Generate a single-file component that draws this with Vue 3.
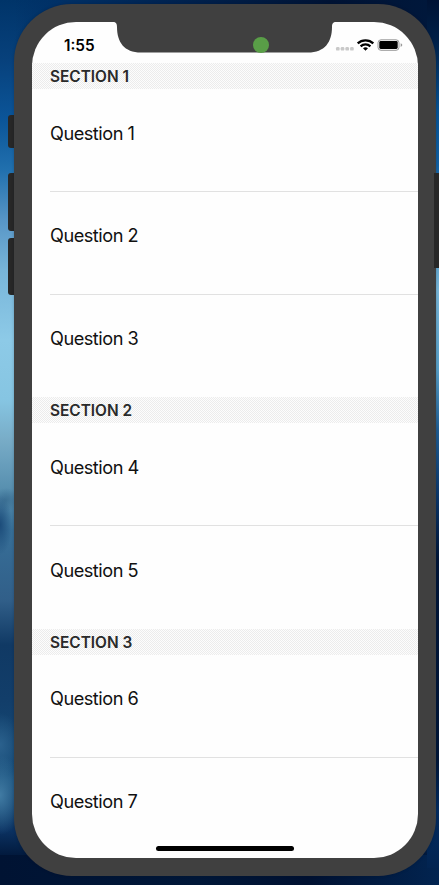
<script setup>
const sections = [
  { title: 'SECTION 1', questions: ['Question 1', 'Question 2', 'Question 3'] },
  { title: 'SECTION 2', questions: ['Question 4', 'Question 5'] },
  { title: 'SECTION 3', questions: ['Question 6', 'Question 7'] },
]
</script>

<template>
  <div class="desktop">
    <span class="key mute"></span>
    <span class="key up"></span>
    <span class="key down"></span>
    <span class="key power"></span>
    <div class="phone">
      <main class="screen">
        <svg class="notch" viewBox="0 0 223 31" width="223" height="31">
          <path d="M0 0C3 0 4 1.5 4 5C4 20 11 30.5 28 30.5H195C212 30.5 219 20 219 5C219 1.5 220 0 223 0Z" fill="#404040" />
          <circle cx="148" cy="23" r="8" fill="#599e47" />
        </svg>
        <header class="status">
          <span class="time">1:55</span>
          <svg class="indicators" width="68" height="14" viewBox="0 0 68 14">
            <g fill="#c9c9c9">
              <rect x="1" y="9" width="3.6" height="3.6" rx="1.2" />
              <rect x="5.7" y="9" width="3.6" height="3.6" rx="1.2" />
              <rect x="10.4" y="9" width="3.6" height="3.6" rx="1.2" />
              <rect x="15.1" y="9" width="3.6" height="3.6" rx="1.2" />
            </g>
            <g transform="translate(-.5 .8)">
              <g fill="none" stroke="#000" stroke-width="2.3">
                <path d="M23.2 4.6C27.4.5 34.6.5 38.8 4.6" />
                <path d="M26.1 7.6C28.9 4.9 33.1 4.9 35.9 7.6" />
              </g>
              <path d="M28.5 9.4Q31 7.3 33.5 9.4L31 11.9Z" />
            </g>
            <rect x="43" y="1.8" width="21" height="10.5" rx="3" fill="none" stroke="#999" />
            <rect x="44.3" y="3.1" width="18.4" height="7.9" rx="1.4" />
            <path d="M65.7 5.3Q67.3 5.8 67.3 7.1T65.7 8.9Z" fill="#999" />
          </svg>
        </header>
        <section v-for="section in sections" :key="section.title">
          <h2>{{ section.title }}</h2>
          <ul>
            <li v-for="question in section.questions" :key="question">{{ question }}</li>
          </ul>
        </section>
        <div class="home"></div>
      </main>
    </div>
  </div>
</template>

<style>
body {
  margin: 0;
}
</style>

<style scoped>
.desktop {
  position: relative;
  box-sizing: border-box;
  width: 439px;
  height: 885px;
  padding: 4px 3.5px 9px 13.5px;
  overflow: hidden;
  font-family: Inter, "Liberation Sans", sans-serif;
  background:
    linear-gradient(#001334, #002047 40px, #075394 110px, #1260a2 165px, #4a96c5 240px, #78b6d8 290px, #579fc7 370px, #205d92 430px, #0b3567 500px, #001536 560px, #001637 760px, #032c60 810px, #022451 868px, transparent 868px) right / 12px 100% no-repeat,
    linear-gradient(90deg, rgba(0, 52, 105, 0) 14px, #003066 60px, #002554 35%, #001334 75%, #00183c) 0 0 / 100% 40px no-repeat,
    linear-gradient(90deg, #001333, #001738 45%, #001131 70%, #022450) 0 100% / 100% 30px no-repeat,
    radial-gradient(ellipse 24px 40px at 0 795px, #417ba3, rgba(65, 123, 163, 0)),
    radial-gradient(ellipse 22px 32px at 0 745px, #2b618d, rgba(43, 97, 141, 0)),
    radial-gradient(ellipse 12px 30px at 0 525px, #1c4c7a, rgba(28, 76, 122, 0)),
    radial-gradient(ellipse 14px 12px at 6px 500px, #3c7094, rgba(60, 112, 148, 0)),
    linear-gradient(#003469, #07417c 60px, #0b5599 120px, #2170ae 170px, #5795c6 220px, #78b5d9 270px, #8dcae7 340px, #86c5e2 400px, #78acc7 440px, #578faf 490px, #376f98 530px, #315f89 600px, #103964 645px, #123e6a 700px, #164e7b 780px, #0b3262 830px, #001536 860px);
}

.phone {
  position: relative;
  box-sizing: border-box;
  height: 872px;
  padding: 18px;
  border-radius: 58px;
  background: #404040;
  box-shadow: 0 0 3px rgba(0, 10, 30, 0.25);
}

.screen {
  position: relative;
  height: 836px;
  overflow: hidden;
  border-radius: 44px;
  background: #fefefe;
}

.notch {
  position: absolute;
  top: 0;
  left: 81.5px;
}

.status {
  display: flex;
  box-sizing: border-box;
  height: 41px;
  padding: 15px 15px 0 32.5px;
  justify-content: space-between;
}

.time {
  font-size: 15.3px;
  font-weight: 600;
  line-height: 17px;
}

.indicators {
  margin-top: 1px;
}

h2 {
  height: 26px;
  margin: 0;
  padding-left: 18.5px;
  color: #2a2a2a;
  font-size: 15.4px;
  font-weight: 600;
  line-height: 27px;
  background: repeating-conic-gradient(#ececec 0 25%, #fdfdfd 0 50%) 0 0 / 2px 2px;
}

ul {
  margin: 0;
  padding: 0 0 0 18.5px;
  list-style: none;
}

li {
  box-sizing: border-box;
  height: 102.75px;
  padding-top: 32.6px;
  border-bottom: 1px solid #e1e1e1;
  color: #111;
  font-size: 18.2px;
  letter-spacing: -0.5px;
  line-height: 23px;
}

li:last-child {
  border-bottom: 0;
}

.home {
  position: absolute;
  bottom: 7px;
  left: 124px;
  width: 138px;
  height: 5px;
  border-radius: 3px;
  background: #000;
}

.key {
  position: absolute;
  left: 8px;
  width: 9px;
  border-radius: 3px;
  background: #272727;
}

.mute {
  top: 115px;
  height: 33px;
}

.up {
  top: 173px;
  height: 58px;
}

.down {
  top: 238px;
  height: 57px;
}

.power {
  z-index: 1;
  top: 173px;
  left: 434px;
  height: 95px;
  border-radius: 0;
}
</style>
